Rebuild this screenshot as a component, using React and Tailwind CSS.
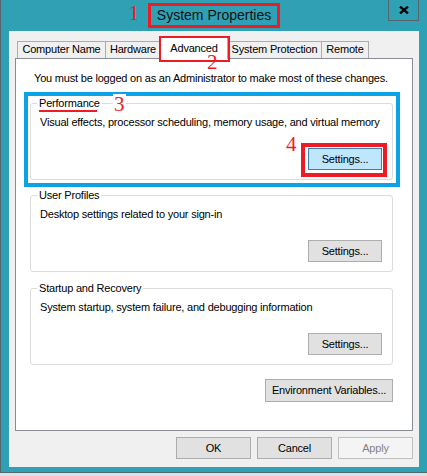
import React from 'react';

const red = 'border-[#ed1c24]';

function Tab({ label, w, active }) {
  if (active) {
    return (
      <div className={`relative z-10 -ml-px mb-[-1px] flex h-[22px] ${w} justify-center border-x border-t border-[#acacac] bg-white pt-[3px]`}>
        {label}
        <span className={`pointer-events-none absolute -left-[2px] -right-[3px] -top-[2px] -bottom-[3px] border-2 ${red}`} />
        <span className="absolute left-[46px] top-[15px] font-['Liberation_Serif',serif] text-[21px] leading-[19px] tracking-normal text-[#ed1c24]">2</span>
      </div>
    );
  }
  return (
    <div className={`-ml-px flex h-[17px] ${w} justify-center border-x border-t border-[#acacac] bg-[#f0f0f0] first:ml-0`}>
      {label}
    </div>
  );
}

function Btn({ children, className = '' }) {
  return (
    <button className={`h-[22px] border border-[#adadad] bg-[#e1e1e1] text-[11px] leading-[15px] text-black ${className}`}>
      {children}
    </button>
  );
}

export default function App() {
  return (
    <div className="h-[476px] w-[427px] overflow-hidden whitespace-nowrap bg-[#d5e3ea] font-['Liberation_Sans',Arial,sans-serif] text-[11px] leading-[15px] tracking-[-0.2px] text-black">
      <div className="flex h-[473px] w-[427px] flex-col border-b border-l border-[#56656d] bg-[#30a0b4] px-[8px] pb-[5px]">
        {/* title bar */}
        <div className="grid h-[31px] shrink-0 grid-cols-[1fr_auto_1fr]">
          <div />
          <div className={`relative mt-[3px] h-[25px] self-start border-[3px] ${red} px-[6px] text-[14px] leading-[19px] tracking-normal text-[#111]`}>
            System Properties
            <span className="absolute -left-[22px] -top-[3px] font-['Liberation_Serif',serif] text-[21px] leading-[21px] text-[#ed1c24]">1</span>
          </div>
          <div className="flex justify-end">
            <div className="flex h-[21px] w-[31px] items-center justify-center border-x border-b border-[#55656e]">
              <svg width="10" height="8" viewBox="0 0 10 8">
                <path d="M1 0.6 L9 7.4 M9 0.6 L1 7.4" stroke="#000" strokeWidth="2.3" />
              </svg>
            </div>
          </div>
        </div>

        {/* dialog body */}
        <div className="flex flex-1 flex-col bg-[#f0f0f0] px-[6px] pb-[8px] pt-[6px]">
          <div className="flex h-[21px] shrink-0 items-end pl-[2px]">
            <Tab label="Computer Name" w="w-[89px]" />
            <Tab label="Hardware" w="w-[56px]" />
            <Tab label="Advanced" w="w-[68px]" active />
            <Tab label="System Protection" w="w-[95px]" />
            <Tab label="Remote" w="w-[48px]" />
          </div>

          <div className="flex flex-1 flex-col border border-[#898c95] bg-white pl-[14px] pr-[19px] pt-[12px]">
            <p className="ml-[4px]">You must be logged on as an Administrator to make most of these changes.</p>

            <div className="relative mt-[10px]">
              <span className="pointer-events-none absolute -bottom-[7px] -left-[6px] -right-[7px] -top-[4px] border-4 border-[#0ba3e6]" />
              <fieldset className="rounded-[3px] border border-[#dcdcdc] pb-[9px] pl-[6px] pr-[10px] pt-[4px]">
                <legend className="relative px-[2px]">
                  <span className="relative">
                    Performance
                    <span className="absolute left-0 right-[3px] top-[13px] h-[2px] bg-[#ed1c24]" />
                  </span>
                  <span className="absolute left-[76px] -top-[2px] bg-white px-[1px] font-['Liberation_Serif',serif] text-[21px] leading-[21px] tracking-normal text-[#ed1c24]">3</span>
                </legend>
                <p className="ml-[3px]">Visual effects, processor scheduling, memory usage, and virtual memory</p>
                <div className="mt-[18px] flex justify-end">
                  <div className="relative">
                    <span className={`pointer-events-none absolute -bottom-[7px] -left-[7px] -right-[5px] -top-[5px] border-4 ${red}`} />
                    <span className="absolute -left-[22px] -top-[14px] font-['Liberation_Serif',serif] text-[21px] leading-[21px] tracking-normal text-[#ed1c24]">4</span>
                    <button className="h-[22px] w-[74px] border border-[#3c7fb1] bg-[#bee6fd] text-[11px] leading-[15px] text-black">Settings...</button>
                  </div>
                </div>
              </fieldset>
            </div>

            <fieldset className="mt-[8px] rounded-[3px] border border-[#dcdcdc] pb-[9px] pl-[6px] pr-[10px] pt-[4px]">
              <legend className="px-[2px]">User Profiles</legend>
              <p className="ml-[3px]">Desktop settings related to your sign-in</p>
              <div className="mt-[18px] flex justify-end">
                <Btn className="w-[74px]">Settings...</Btn>
              </div>
            </fieldset>

            <fieldset className="mt-[9px] rounded-[3px] border border-[#dcdcdc] pb-[9px] pl-[6px] pr-[10px] pt-[4px]">
              <legend className="px-[2px]">Startup and Recovery</legend>
              <p className="ml-[3px]">System startup, system failure, and debugging information</p>
              <div className="mt-[18px] flex justify-end">
                <Btn className="w-[74px]">Settings...</Btn>
              </div>
            </fieldset>

            <div className="mt-[14px] flex justify-end">
              <Btn className="h-[23px] w-[128px]">Environment Variables...</Btn>
            </div>
          </div>

          <div className="mt-[6px] flex shrink-0 justify-end gap-[6px]">
            <Btn className="w-[75px]">OK</Btn>
            <Btn className="w-[75px]">Cancel</Btn>
            <button className="h-[22px] w-[75px] border border-[#bfbfbf] bg-[#f4f4f4] text-[11px] leading-[15px] text-[#838383]">Apply</button>
          </div>
        </div>
      </div>
    </div>
  );
}
